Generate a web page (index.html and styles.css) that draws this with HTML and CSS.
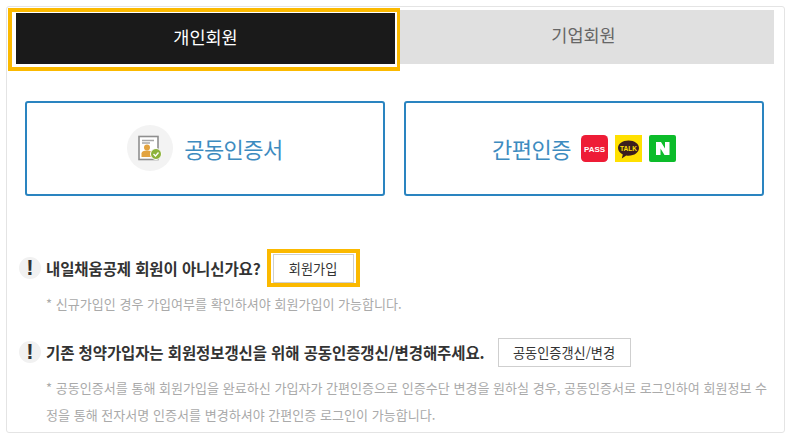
FILE: index.html
```html
<!DOCTYPE html>
<html lang="ko">
<head>
<meta charset="utf-8">
<title>회원가입</title>
<link rel="stylesheet" href="styles.css">
</head>
<body>
<main class="panel">
  <div class="tabs">
    <div class="tab-active"><div class="tab-active-inner">개인회원</div></div>
    <div class="tab-idle">기업회원</div>
  </div>
  <div class="methods">
    <a class="method">
      <span class="cert-circle">
        <svg width="26" height="26" viewBox="0 0 26 26">
          <rect x="2" y="1.500" width="19" height="23" fill="#fff" stroke="#8f8f8f" stroke-width="1.600"/>
          <path d="M5 5.500h12M5 8h8" stroke="#a8a8a8" stroke-width="1.300"/>
          <circle cx="10" cy="12.500" r="3" fill="#e2a340"/>
          <path d="M4.500 22v-3.500c0-2 2-3 5.500-3s5.500 1 5.500 3V22z" fill="#e2a340"/>
          <circle cx="19" cy="19" r="5.500" fill="#8cb23a" stroke="#fff" stroke-width="1"/>
          <path d="M16.500 19l2 2 3-3.500" fill="none" stroke="#fff" stroke-width="1.300"/>
        </svg>
      </span>
      <span class="method-label">공동인증서</span>
    </a>
    <a class="method">
      <span class="method-label">간편인증</span>
      <span class="brands">
        <svg class="brand" viewBox="0 0 27 27">
          <rect width="27" height="27" rx="4.500" fill="#ee1c36"/>
          <text x="13.500" y="16.500" text-anchor="middle" class="pass-text">PASS</text>
        </svg>
        <svg class="brand" viewBox="0 0 27 27">
          <rect width="27" height="27" fill="#ffe000"/>
          <path d="M13.500 5.500c-6 0-10.500 3.300-10.500 7.600 0 2.800 2 5.200 4.800 6.500l-1 4 4.400-3c.8.100 1.500.2 2.300.2 6 0 10.500-3.400 10.500-7.700s-4.500-7.600-10.500-7.600z" fill="#3b1e1e"/>
          <text x="13.500" y="15.800" text-anchor="middle" class="talk-text">TALK</text>
        </svg>
        <svg class="brand" viewBox="0 0 27 27">
          <rect width="27" height="27" rx="2" fill="#0cbc2a"/>
          <path d="M7 7h5l4 6.500V7h4.500v13h-5L11.500 13.500V20H7z" fill="#fff"/>
        </svg>
      </span>
    </a>
  </div>
  <section class="notice notice-first">
    <div class="notice-head">
      <span class="bang">!</span>
      <strong class="notice-title">내일채움공제 회원이 아니신가요?</strong>
      <span class="highlight"><button class="btn btn-join">회원가입</button></span>
    </div>
    <p class="hint">* 신규가입인 경우 가입여부를 확인하셔야 회원가입이 가능합니다.</p>
  </section>
  <section class="notice notice-second">
    <div class="notice-head">
      <span class="bang">!</span>
      <strong class="notice-title">기존 청약가입자는 회원정보갱신을 위해 공동인증갱신/변경해주세요.</strong>
      <button class="btn btn-renew">공동인증갱신/변경</button>
    </div>
    <p class="hint hint-long">* 공동인증서를 통해 회원가입을 완료하신 가입자가 간편인증으로 인증수단 변경을 원하실 경우, 공동인증서로 로그인하여 회원정보 수<br>정을 통해 전자서명 인증서를 변경하셔야 간편인증 로그인이 가능합니다.</p>
  </section>
</main>
</body>
</html>
```
FILE: styles.css
```css
* { box-sizing: border-box; }
html, body { margin: 0; background: #fff; }
body {
  font-family: "Noto Sans CJK KR", "Noto Sans", sans-serif;
  color: #333;
  padding: 6px 0 0 6px;
}
.panel {
  width: 779px;
  height: 427px;
  border: 1px solid #e4e4e4;
  border-radius: 3px;
  padding: 1px 0 0 1px;
}
.tabs { display: flex; align-items: flex-start; }
.tab-active {
  width: 392px;
  height: 63px;
  border: solid #fbb900;
  border-width: 4px 3px 4px 4px;
  padding: 1px 2px 3px 4px;
  background: #fff;
  flex: none;
}
.tab-active-inner {
  height: 100%;
  background: #1a1a1a;
  color: #fff;
  font-size: 17.500px;
  padding-bottom: 5px;
  display: flex;
  align-items: center;
  justify-content: center;
}
.tab-idle {
  width: 374px;
  height: 54px;
  margin-top: 2px;
  background: #e0e0e0;
  color: #666;
  font-size: 17.500px;
  padding: 0 7px 5px 0;
  display: flex;
  align-items: center;
  justify-content: center;
}
.methods {
  display: flex;
  gap: 19px;
  margin: 30px 0 0 17px;
}
.method {
  width: 360px;
  height: 95px;
  border: 2px solid #2a84c0;
  border-radius: 3px;
  display: flex;
  align-items: center;
  justify-content: center;
  color: #3d8bbf;
  padding-bottom: 1px;
}
.cert-circle {
  width: 46px;
  height: 46px;
  border-radius: 50%;
  background: #f3f3f3;
  display: flex;
  align-items: center;
  justify-content: center;
  margin-right: 11px;
}
.method-label { font-size: 22px; letter-spacing: -0.5px; line-height: 30px; }
.brands { display: flex; gap: 7px; margin-left: 10px; }
.brand { width: 27px; height: 27px; display: block; }
.pass-text { font: 700 8px "Liberation Sans", sans-serif; fill: #fff; }
.talk-text { font: 700 6.500px "Liberation Sans", sans-serif; fill: #ffe000; }
.notice { margin-left: 11px; }
.notice-first { margin-top: 53px; }
.notice-second { margin-top: 19px; }
.notice-head { display: flex; align-items: center; height: 38px; }
.bang {
  width: 22px;
  height: 22px;
  border-radius: 50%;
  background: #f1f1f1;
  color: #333;
  font: 700 22px/22px "Liberation Sans", sans-serif;
  text-align: center;
  margin-right: 5px;
  flex: none;
}
.notice-title { font-size: 15.500px; font-weight: 700; color: #333; letter-spacing: -0.1px; }
.highlight {
  border: 4px solid #fbb900;
  padding: 1px 2px;
  height: 38px;
  width: 93px;
  margin-left: 6px;
  display: flex;
  flex: none;
}
.btn {
  font-family: inherit;
  font-size: 13.200px;
  color: #333;
  background: #fff;
  border: 1px solid #cfcfcf;
  padding: 0;
}
.btn-join { width: 100%; height: 29px; }
.btn-renew { width: 133px; height: 29px; margin-left: 13px; flex: none; }
.hint { margin: 0; font-size: 13.050px; color: #aaa; line-height: 27px; }
.notice-first .hint { margin: 7px 0 0 27px; line-height: 20px; }
.hint-long { margin: 4px 0 0 27px; white-space: nowrap; line-height: 26.500px; }
```
